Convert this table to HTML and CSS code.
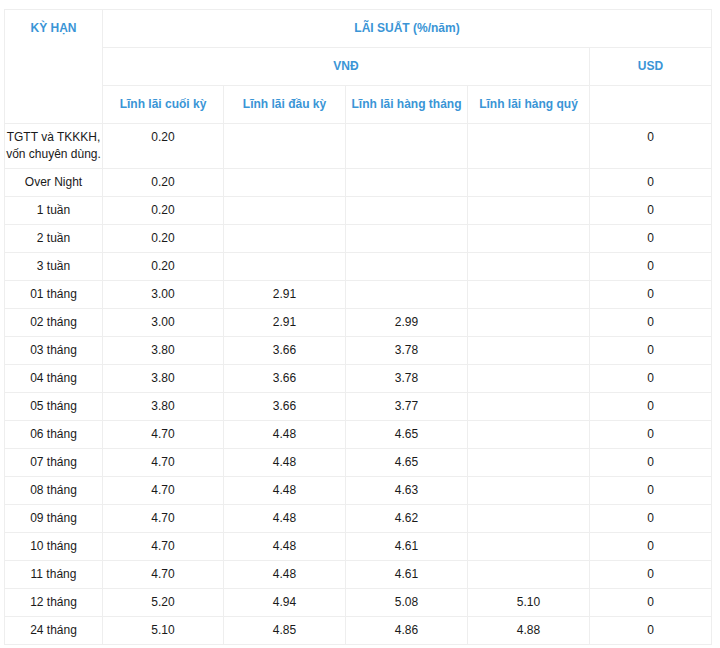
FILE: index.html
```html
<!DOCTYPE html>
<html lang="vi">
<head>
<meta charset="utf-8">
<title>Lãi suất</title>
<link rel="stylesheet" href="styles.css">
</head>
<body>
<div class="wrap">
<table class="rates">
  <colgroup>
    <col class="c1"><col class="c2"><col class="c3"><col class="c4"><col class="c5"><col class="c6">
  </colgroup>
  <thead>
    <tr>
      <th rowspan="3" class="top">KỲ HẠN</th>
      <th colspan="5">LÃI SUẤT (%/năm)</th>
    </tr>
    <tr>
      <th colspan="4">VNĐ</th>
      <th>USD</th>
    </tr>
    <tr>
      <th>Lĩnh lãi cuối kỳ</th>
      <th>Lĩnh lãi đầu kỳ</th>
      <th>Lĩnh lãi hàng tháng</th>
      <th>Lĩnh lãi hàng quý</th>
      <th></th>
    </tr>
  </thead>
  <tbody>
    <tr><td class="term">TGTT và TKKKH, vốn chuyên dùng.</td><td>0.20</td><td></td><td></td><td></td><td>0</td></tr>
    <tr><td class="term">Over Night</td><td>0.20</td><td></td><td></td><td></td><td>0</td></tr>
    <tr><td class="term">1 tuần</td><td>0.20</td><td></td><td></td><td></td><td>0</td></tr>
    <tr><td class="term">2 tuần</td><td>0.20</td><td></td><td></td><td></td><td>0</td></tr>
    <tr><td class="term">3 tuần</td><td>0.20</td><td></td><td></td><td></td><td>0</td></tr>
    <tr><td class="term">01 tháng</td><td>3.00</td><td>2.91</td><td></td><td></td><td>0</td></tr>
    <tr><td class="term">02 tháng</td><td>3.00</td><td>2.91</td><td>2.99</td><td></td><td>0</td></tr>
    <tr><td class="term">03 tháng</td><td>3.80</td><td>3.66</td><td>3.78</td><td></td><td>0</td></tr>
    <tr><td class="term">04 tháng</td><td>3.80</td><td>3.66</td><td>3.78</td><td></td><td>0</td></tr>
    <tr><td class="term">05 tháng</td><td>3.80</td><td>3.66</td><td>3.77</td><td></td><td>0</td></tr>
    <tr><td class="term">06 tháng</td><td>4.70</td><td>4.48</td><td>4.65</td><td></td><td>0</td></tr>
    <tr><td class="term">07 tháng</td><td>4.70</td><td>4.48</td><td>4.65</td><td></td><td>0</td></tr>
    <tr><td class="term">08 tháng</td><td>4.70</td><td>4.48</td><td>4.63</td><td></td><td>0</td></tr>
    <tr><td class="term">09 tháng</td><td>4.70</td><td>4.48</td><td>4.62</td><td></td><td>0</td></tr>
    <tr><td class="term">10 tháng</td><td>4.70</td><td>4.48</td><td>4.61</td><td></td><td>0</td></tr>
    <tr><td class="term">11 tháng</td><td>4.70</td><td>4.48</td><td>4.61</td><td></td><td>0</td></tr>
    <tr><td class="term">12 tháng</td><td>5.20</td><td>4.94</td><td>5.08</td><td>5.10</td><td>0</td></tr>
    <tr><td class="term">24 tháng</td><td>5.10</td><td>4.85</td><td>4.86</td><td>4.88</td><td>0</td></tr>
  </tbody>
</table>
<p class="note">Lãi suất trên áp dụng cho khách hàng cá nhân, mức lãi suất có thể thay đổi theo từng thời kỳ.</p>
</div>
</body>
</html>
```
FILE: styles.css
```css
html, body {
  margin: 0;
  padding: 0;
  background: #ffffff;
}
body {
  font-family: "Liberation Sans", Arial, sans-serif;
  font-size: 12px;
  line-height: 17px;
  color: #1a1a1a;
  overflow: hidden;
}
.wrap {
  padding: 9px 9px 0 4px;
}
.rates {
  border-collapse: collapse;
  table-layout: fixed;
  width: 707px;
}
.c1 { width: 98px; }
.c2 { width: 121px; }
.c3 { width: 122px; }
.c4 { width: 122px; }
.c5 { width: 122px; }
.c6 { width: 122px; }
.rates th,
.rates td {
  border: 1px solid #eeeeee;
  text-align: center;
}
.rates th {
  color: #3a95d6;
  font-weight: bold;
  padding: 10px 2px;
  height: 17px;
}
.rates th.top {
  vertical-align: top;
}
.rates td {
  padding: 5px 1px;
  vertical-align: top;
  height: 17px;
}
.note {
  margin: 2px 0 0 0;
  color: #555555;
  font-size: 12px;
  line-height: 17px;
}
```
